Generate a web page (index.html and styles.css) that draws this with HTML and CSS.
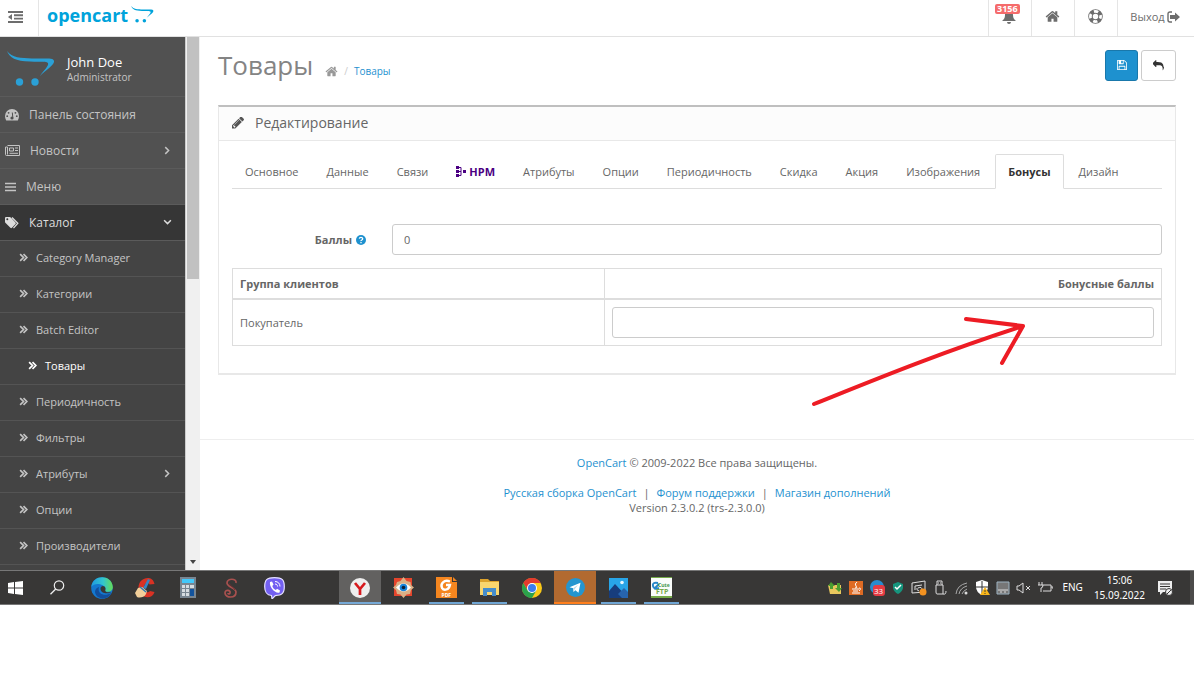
FILE: index.html
```html
<!DOCTYPE html>
<html lang="ru">
<head>
<meta charset="utf-8">
<title>Товары</title>
<link rel="stylesheet" href="styles.css">
</head>
<body>
<svg class="defs" aria-hidden="true">
  <symbol id="home" viewBox="0 0 1792 1792"><path d="M1472 992v480q0 26-19 45t-45 19h-384v-384h-256v384h-384q-26 0-45-19t-19-45v-480q0-1 .5-3t.5-3l575-474 575 474q1 2 1 6zm223-69l-62 74q-8 9-21 11h-3q-13 0-21-7l-692-577-692 577q-12 8-24 7-13-2-21-11l-62-74q-8-10-7-23.500t11-21.500l719-599q32-26 76-26t76 26l244 204v-195q0-14 9-23t23-9h192q14 0 23 9t9 23v408l219 182q10 8 11 21.500t-7 23.500z"/></symbol>
  <symbol id="dbl" viewBox="0 0 8 8"><path d="M1 1l3 3-3 3M4 1l3 3-3 3" fill="none" stroke="currentColor" stroke-width="1.500"/></symbol>
  <symbol id="right" viewBox="0 0 8 8"><path d="M2 1l3 3-3 3" fill="none" stroke="currentColor" stroke-width="1.300"/></symbol>
  <symbol id="down" viewBox="0 0 8 8"><path d="M1 2l3 3 3-3" fill="none" stroke="currentColor" stroke-width="1.300"/></symbol>
  <symbol id="cart" viewBox="0 0 48 36"><path d="M0 0C5 7 14 7 25 7.500C38 8 48 6 47 11C46 15 39 19 33 25C37 19 42 15 41 12C40 10 31 11 23 10.500C8 10 3 7 0 0z"/><circle cx="12.500" cy="31" r="3.700"/><circle cx="28" cy="31" r="3.700"/></symbol>
</svg>
<div class="screen">
  <header class="topbar">
    <button class="collapse" aria-label="Свернуть меню"><svg width="15" height="12" viewBox="0 0 15 12"><path d="M0 1h15M6 4.300h9M6 7.600h9M0 11h15" stroke="currentColor" stroke-width="1.900"/><path d="M4 3v6L0 6z"/></svg></button>
    <a class="brand" href="#">opencart<svg width="25" height="17"><use href="#cart"/></svg></a>
    <nav class="tools">
      <a href="#" aria-label="Уведомления"><svg width="14" height="14" viewBox="0 0 14 14"><path d="M7 0c3 0 4 2 4 5 0 3 1 4 3 6H0c2-2 3-3 3-6 0-3 1-5 4-5zM5 12h4q0 2-2 2t-2-2z"/></svg><span class="count">3156</span></a>
      <a href="#" aria-label="Главная"><svg width="15" height="15"><use href="#home"/></svg></a>
      <a href="#" aria-label="Помощь"><svg width="15" height="15" viewBox="0 0 15 15"><circle cx="7.500" cy="7.500" r="5" fill="none" stroke="currentColor" stroke-width="4.500"/><circle cx="7.500" cy="7.500" r="5.100" fill="none" stroke="#fff" stroke-width="2.700" stroke-dasharray="4.400 3.610" stroke-dashoffset="2.200"/></svg></a>
      <a class="logout" href="#">Выход<svg width="13" height="12" viewBox="0 0 13 12"><path d="M5 1H3Q1 1 1 3v6q0 2 2 2h2" fill="none" stroke="currentColor" stroke-width="1.400"/><path d="M3 4h5V1.500L13 6l-5 4.500V8H3z"/></svg></a>
    </nav>
  </header>
  <div class="body">
    <aside class="sidebar">
      <div class="profile"><svg width="48" height="36"><use href="#cart"/></svg><div><b>John Doe</b><small>Administrator</small></div></div>
      <nav class="menu">
        <a href="#"><svg width="14" height="12" viewBox="0 0 14 12"><path d="M0 7a7 7 0 0114 0q0 2.500-1.200 4.500H1.200Q0 9.500 0 7z"/><path d="M7.300 3.500l.5 5" stroke="#515151" stroke-width="1"/><circle class="hole" cx="7" cy="9" r="1.600"/><circle class="hole" cx="2.200" cy="7.200" r=".9"/><circle class="hole" cx="3.600" cy="3.800" r=".9"/><circle class="hole" cx="10.400" cy="3.800" r=".9"/><circle class="hole" cx="11.800" cy="7.200" r=".9"/></svg>Панель состояния</a>
        <a href="#"><svg width="15" height="11" viewBox="0 0 15 11"><path d="M2.500 .5h12v10H1.500q-1 0-1-1V2h2v7.500M4.500 3h4v3h-4zM10 3h3M10 5.500h3M4.500 8.300H13" fill="none" stroke="currentColor"/></svg>Новости<svg class="arrow" width="9" height="9"><use href="#right"/></svg></a>
        <a href="#"><svg width="11" height="10" viewBox="0 0 11 10"><path d="M0 1.500h11M0 5h11M0 8.500h11" stroke="currentColor" stroke-width="1.700"/></svg>Меню</a>
        <a class="open" href="#"><svg width="14" height="12" viewBox="0 0 14 12"><path d="M0 1q0-1 1-1h3.500q.7 0 1.300.6L10.500 5.500q.8.800 0 1.600L7 10.800q-.8.800-1.600 0L.6 6Q0 5.400 0 4.700z"/><path d="M7 .5l5.800 5.700L8.500 11.200" fill="none" stroke="currentColor" stroke-width="1.300"/><circle cx="2.300" cy="2.300" r="1" fill="#363636"/></svg>Каталог<svg class="arrow" width="9" height="9"><use href="#down"/></svg></a>
      </nav>
      <nav class="submenu">
        <a href="#"><svg><use href="#dbl"/></svg>Category Manager</a>
        <a href="#"><svg><use href="#dbl"/></svg>Категории</a>
        <a href="#"><svg><use href="#dbl"/></svg>Batch Editor</a>
        <a class="current" href="#"><svg><use href="#dbl"/></svg>Товары</a>
        <a href="#"><svg><use href="#dbl"/></svg>Периодичность</a>
        <a href="#"><svg><use href="#dbl"/></svg>Фильтры</a>
        <a href="#"><svg><use href="#dbl"/></svg>Атрибуты<svg class="arrow"><use href="#right"/></svg></a>
        <a href="#"><svg><use href="#dbl"/></svg>Опции</a>
        <a href="#"><svg><use href="#dbl"/></svg>Производители</a>
      </nav>
    </aside>
    <div class="scroll"><div class="thumb"></div><svg width="6" height="4" viewBox="0 0 6 4"><path d="M0 0h6L3 4z"/></svg></div>
    <main class="content">
      <div class="heading">
        <h1>Товары</h1>
        <nav class="crumbs"><a href="#" aria-label="Главная"><svg width="13" height="13"><use href="#home"/></svg></a><span>/</span><a href="#">Товары</a></nav>
        <div class="actions">
          <button class="btn save" aria-label="Сохранить"><svg width="10" height="10" viewBox="128 128 1536 1536"><path d="M512 1536h768v-384h-768v384zm896 0h128v-896q0-14-10-38.500t-20-34.500l-281-281q-10-10-34-20t-39-10v416q0 40-28 68t-68 28h-576q-40 0-68-28t-28-68v-416h-128v1280h128v-416q0-40 28-68t68-28h832q40 0 68 28t28 68v416zm-384-928v-320q0-13-9.500-22.500t-22.500-9.500h-192q-13 0-22.500 9.500t-9.500 22.500v320q0 13 9.500 22.500t22.500 9.500h192q13 0 22.500-9.500t9.500-22.500zm640 32v928q0 40-28 68t-68 28h-1344q-40 0-68-28t-28-68v-1344q0-40 28-68t68-28h928q40 0 88 20t76 48l280 280q28 28 48 76t20 88z"/></svg></button>
          <button class="btn" aria-label="Назад"><svg width="11" height="11" viewBox="0 0 1792 1792"><path d="M1792 1120q0 166-127 451-3 7-10.500 24t-13.500 30-13 22q-12 17-28 17-15 0-23.500-10t-8.500-25q0-9 2.500-26.500t2.500-23.500q5-68 5-123 0-112-19.500-200.500t-54-153.500-89-112-118-78-149-47.500-176-22.500-204.500-7h-224v256q0 26-19 45t-45 19-45-19l-512-512q-19-19-19-45t19-45l512-512q19-19 45-19t45 19 19 45v256h224q713 0 875 403 53 134 53 333z"/></svg></button>
        </div>
      </div>
      <section class="panel">
        <h2><svg width="12" height="12" viewBox="128 256 1520 1408"><path d="M491 1536l91-91-235-235-91 91v107h128v128h107zm523-928q0-22-22-22-10 0-17 7l-542 542q-7 7-7 17 0 22 22 22 10 0 17-7l542-542q7-7 7-17zm-54-192l416 416-832 832h-416v-416zm683 96q0 53-37 90l-166 166-416-416 166-165q36-38 90-38 53 0 91 38l235 234q37 39 37 91z"/></svg>Редактирование</h2>
        <div class="panel-body">
          <nav class="tabs">
            <a href="#">Основное</a><a href="#">Данные</a><a href="#">Связи</a>
            <a class="hpm" href="#"><svg width="10" height="11" viewBox="0 0 10 11"><path d="M0 0h3v3H0zM0 4h3v3H0zM0 8h3v3H0zM7 4h3v3H7z"/><path d="M2 1.500h3v8H2M2 5.500h3" fill="none" stroke="currentColor"/></svg>HPM</a>
            <a href="#">Атрибуты</a><a href="#">Опции</a><a href="#">Периодичность</a><a href="#">Скидка</a><a href="#">Акция</a><a href="#">Изображения</a><a class="active" href="#">Бонусы</a><a href="#">Дизайн</a>
          </nav>
          <div class="field">
            <label for="points">Баллы <svg width="10" height="10" viewBox="0 0 10 10"><circle cx="5" cy="5" r="5"/><path d="M3.300 3.700Q3.500 2.300 5 2.300T6.700 3.700Q6.700 4.500 5.800 5T5 6.200M5 7v1.200" fill="none" stroke="#fff" stroke-width="1.300"/></svg></label>
            <input id="points" type="text" value="0">
          </div>
          <table>
            <thead><tr><th>Группа клиентов</th><th class="num">Бонусные баллы</th></tr></thead>
            <tbody><tr><td>Покупатель</td><td><input type="text" aria-label="Бонусные баллы, Покупатель"></td></tr></tbody>
          </table>
        </div>
        <svg class="pointer" width="220" height="92" viewBox="0 0 220 92" aria-hidden="true"><path d="M5 89C60 67 130 38 214 11M157 4l57 7-21 37"/></svg>
      </section>
      <footer class="footer">
        <p><a href="#">OpenCart</a> © 2009-2022 Все права защищены.</p>
        <p class="links"><a href="#">Русская сборка OpenCart</a><span>|</span><a href="#">Форум поддержки</a><span>|</span><a href="#">Магазин дополнений</a></p>
        <p>Version 2.3.0.2 (trs-2.3.0.0)</p>
      </footer>
    </main>
  </div>
  <div class="taskbar">
    <button class="start" aria-label="Пуск"><svg width="15" height="14" viewBox="0 0 15 14"><path fill="#fff" d="M0 2l6-1v5.500H0zM7 .9L15 0v6.500H7zM0 7.500h6V13l-6-1zM7 7.500h8V14l-8-1z"/></svg></button>
    <button class="search" aria-label="Поиск"><svg width="15" height="15" viewBox="0 0 15 15"><circle cx="9" cy="5.500" r="4.700" fill="none" stroke="#eee" stroke-width="1.200"/><path d="M5.700 9L.5 14.300" stroke="#eee" stroke-width="1.300"/></svg></button>
    <button aria-label="Edge"><svg width="22" height="22" viewBox="0 0 22 22"><defs><linearGradient id="eg" x1="0" x2="1"><stop offset="0" stop-color="#1f9be0"/><stop offset=".55" stop-color="#32c5cf"/><stop offset="1" stop-color="#65dc55"/></linearGradient></defs><circle cx="11" cy="11" r="10.800" fill="#1478cf"/><path d="M.3 10C1.500-3 21-3 21.800 10c.2 4-4 5.500-7.300 4.500-1.500-.5.200-1.300-.2-3.500C13 6.500 3 5 .3 10z" fill="url(#eg)"/><path d="M8 10c-2 7 5 10 12.500 6C17 22 11 22.500 7 20 2 16 4 11 8 10z" fill="#124e9c"/><path d="M14.500 11.500c-.5-3.500-5-3-5 0 0 5 7 6 11.500 3.500-2 0-6 1-6.700-1z" fill="#383736"/></svg></button>
    <button aria-label="CCleaner"><svg width="22" height="22" viewBox="0 0 22 22"><path d="M20.500 7l-5 .5c-1-2.500-5-2-5.500 2.500-.5 5 4 6.500 6 4l4.500 1c-2 8-15 7-16-4C4 0 19-3 20.500 7z" fill="#d83224"/><path d="M14 2l2 1-4 9-3-1z" fill="#3484c4"/><path d="M4 11l4-1 5 4-1 3c-2 4-7 4-9 3l-2-4z" fill="#f2cf9a"/><path d="M6 10l6 5" stroke="#3178b0" stroke-width="1.500"/></svg></button>
    <button aria-label="Калькулятор"><svg width="16" height="21" viewBox="0 0 16 21"><path fill="#788591" d="M0 0h16v21H0z"/><path fill="#42c8fa" d="M2 2h12v4H2z"/><path fill="#d6dce1" d="M2 8h3v3H2zM6 8h3v3H6zM10 8h4v3h-4zM2 12h3v3H2zM6 12h3v3H6zM2 16h3v3H2zM6 16h3v3H6z"/><path fill="#12539d" d="M10 12h4v7h-4z"/></svg></button>
    <button aria-label="S"><svg width="14" height="20" viewBox="0 0 14 20"><path d="M12 5c1-5-9-5-9 0 0 4 9 5 9 9 0 7-11 6-11 1 0-4 6-3 5 0-.5 1.500-2 1-2 0" fill="none" stroke="#a9514f" stroke-width="1.700"/><path d="M5 5c1 3 5 4 6 7" fill="none" stroke="#672e30"/></svg></button>
    <button aria-label="Viber"><svg width="21" height="22" viewBox="0 0 21 22"><path d="M10.500 .6c8 0 9.800 2.500 9.800 9 0 6.500-2 8.700-9 9L8 22l-.5-3.500C2.500 18 .7 15.500.7 9.600c0-6.500 2-9 9.800-9z" fill="#7360f2" stroke="#e5e1ff" stroke-width="1.200"/><path d="M6 5l2-.5 1.500 3L8.300 9c.5 2 1.800 3 3.500 4l1.300-1.300L16 13.500l-.5 2C11 17 5 9.500 6 5z" fill="#fff"/><path d="M11 4.500c3 0 5 2 5 5M11 7c1.500 0 2.500 1 2.500 2.500" fill="none" stroke="#fff"/></svg></button>
    <button class="yandex" aria-label="Яндекс Браузер"><svg width="20" height="20" viewBox="0 0 20 20"><circle cx="10" cy="10" r="10" fill="#eee"/><path d="M5 5l5 6 5-6M10 10v7" fill="none" stroke="#d7191d" stroke-width="2.700"/></svg></button>
    <button aria-label="Просмотр изображений"><svg width="21" height="21" viewBox="0 0 21 21"><path fill="#e5452c" d="M1 1h18v18H1z"/><path fill="#dab086" d="M10.500 0l3 4 4 1 .5 3 3 2.500L18 13l-1 4-3.500.5-3 3.500-3-3.500L4 17l-1-4-3-2.500L3 8l1-3 3.500-1z"/><path d="M3 10.500q7.500-8 15 0-7.500 8-15 0z" fill="#fff"/><circle cx="10.500" cy="10.500" r="3.800" fill="#1684da"/><circle cx="10.500" cy="10.500" r="1.800" fill="#102034"/></svg></button>
    <button class="running" aria-label="Foxit PDF"><svg width="21" height="21" viewBox="0 0 21 21"><path fill="#f5861f" d="M0 0h16v5h5v16H0z"/><path fill="#f5861f" d="M17 0l4 4h-4z"/><path d="M14 4.500C8 2 4 7 6 11c2 3 7 2 8-3h-4" fill="none" stroke="#fff" stroke-width="2.300"/><text x="5.500" y="20" class="tiny">PDF</text></svg></button>
    <button class="running" aria-label="Проводник"><svg width="19" height="17" viewBox="0 0 19 17"><path fill="#dda32b" d="M0 0h8l2 2h9v5H0z"/><path fill="#f9d66e" d="M0 3h19v13H0z"/><path fill="#468dcb" d="M3 9h13v8h-4v-4H7v4H3z"/></svg></button>
    <button aria-label="Chrome"><svg width="20" height="20" viewBox="0 0 20 20"><circle cx="10" cy="10" r="10" fill="#fbc917"/><path d="M1.300 5A10 10 0 0118.700 5H10L5.700 12.500z" fill="#e33b2e"/><path d="M1.300 5A10 10 0 0010 20l4.300-7.500H5.700z" fill="#2ba24c"/><circle cx="10" cy="10" r="5" fill="#fff"/><circle cx="10" cy="10" r="4" fill="#3b7ded"/></svg></button>
    <button class="telegram" aria-label="Telegram"><svg width="19" height="19" viewBox="0 0 19 19"><circle cx="9.500" cy="9.500" r="9.500" fill="#2495cf"/><path d="M3.500 9.200L14.500 4.700l-2 10-3.200-2.500-1.700 1.700-.5-3.700z" fill="#fff"/><path d="M7.100 10.200l5-3.500-3.500 4.500-1 2.700z" fill="#bcd9e8"/></svg></button>
    <button class="running" aria-label="Фотографии"><svg width="19" height="20" viewBox="0 0 19 20"><path fill="#28a5e8" d="M0 0h19v20H0z"/><path fill="#173d7d" d="M0 13l6-7 13 14H0z"/><path fill="#2764ad" d="M9 16l6-6 4 4v6h-6z"/><circle cx="13" cy="4.500" r="1.800" fill="#e8f7ff"/></svg></button>
    <button class="running" aria-label="CuteFTP"><svg width="21" height="21" viewBox="0 0 21 21"><path fill="#fafcfa" d="M0 0h21v21H0z"/><path fill="#75aa49" d="M0 0h21v1H0zM0 19h21v2H0z"/><path d="M7 6Q1 5 2 9t6 2M3 12l5-5" fill="none" stroke="#2889c8" stroke-width="2"/><text x="7" y="10" class="cute">Cute</text><text x="5" y="17" class="ftp">FTP</text></svg></button>
    <div class="tray">
      <svg viewBox="0 0 16 16"><path fill="#e9c75d" d="M1 5h13v9H3z"/><path fill="#4a9e31" d="M4 2l4 4H6v3H3V6H1zM12 12l-4-4h2V3h3v5h2z"/></svg>
      <svg viewBox="0 0 16 16"><path fill="#df6b24" d="M1 1h14v14H1z"/><path d="M9 2q-3 2-1 4T7 8M4 9h7M5 11h5M4 13h8M11 8q3 0 0 3" fill="none" stroke="#fff"/></svg>
      <svg viewBox="0 0 16 16"><circle cx="8" cy="7" r="7" fill="#278bce"/><rect x="4" y="5" width="12" height="11" rx="3" fill="#e53b43"/><text x="5" y="14" class="badge">33</text></svg>
      <svg viewBox="0 0 16 16"><path fill="#16957d" d="M8 2l5 2v4q-1 4-5 6-4-2-5-6V4z"/><path d="M5 7l2 2 4-4" fill="none" stroke="#fff" stroke-width="1.500"/></svg>
      <svg viewBox="0 0 16 16"><path d="M1 3l13-2v11L1 13zM4 10V6l7-1M7 8q4-2 4 2M8 11q-3-1-2-3" fill="none" stroke="#ddd"/><circle cx="12" cy="12" r="3.500" fill="#f39220"/></svg>
      <svg viewBox="0 0 16 16"><path d="M5 5V1h5v4M4 5h7v9H5q-1 0-1-2zM11 14q3 1 3-3M6 3h1M8 3h1" fill="none" stroke="#ddd"/></svg>
      <svg viewBox="0 0 16 16"><path d="M3 14Q4 5 14 3M6 14q1-6 8-8M9 14q1-3 5-5" fill="none" stroke="#aaa"/><circle cx="13" cy="13" r="1.500" fill="#ddd"/></svg>
      <svg viewBox="0 0 16 16"><path fill="#fff" d="M8 0l6 2v5q0 5-6 8-6-3-6-8V2z"/><path d="M8 1v13M2 7h12" stroke="#333"/><path fill="#f9b61b" d="M11 7l5 8H6z"/><path d="M11 10v2M11 13v1" stroke="#443"/></svg>
      <svg viewBox="0 0 16 16"><path d="M2 2h12v12H2z" fill="#777" stroke="#9eb4c2"/><path d="M3 10h10M5 12h2M9 12h2" stroke="#ddd"/></svg>
      <svg viewBox="0 0 16 16"><path d="M1 6h2l4-3v10l-4-3H1zM10 6l4 4M14 6l-4 4" fill="none" stroke="#ddd"/></svg>
      <svg viewBox="0 0 16 16"><path d="M6 5h8v6H6M14 7h2v2M2 2v3M5 2v3M1 5h5q0 3-2 3v4" fill="none" stroke="#ddd"/></svg>
      <span class="lang">ENG</span>
      <div class="clock"><span>15:06</span><span>15.09.2022</span></div>
      <svg class="notes" viewBox="0 0 16 16"><path fill="#eee" d="M1 1h14v11H6l-3 3v-3H1z"/><path d="M3 4h10M3 6.500h10M3 9h6" stroke="#383736"/><circle cx="12" cy="12" r="3.500" fill="#eee" stroke="#383736"/><path d="M10 14l4-4" stroke="#383736"/></svg>
    </div>
  </div>
</div>
</body>
</html>
```

FILE: styles.css
```css
* { box-sizing: border-box; }
body { margin: 0; background: #fff; color: #666; font: 11px/15px "Open Sans", "Noto Sans", sans-serif; }
a { color: #1e91cf; text-decoration: none; }
h1, h2, p { margin: 0; font-weight: 400; }
svg { flex: none; fill: currentColor; }
button { border: 0; padding: 0; background: none; color: inherit; font: inherit; }
.defs { position: absolute; width: 0; height: 0; }
.screen { margin-right: 6px; }

.topbar { display: flex; height: 37px; border-bottom: 1px solid #e1e1e1; }
.collapse { display: flex; align-items: center; justify-content: center; width: 39px; padding: 0 8px 2px 0; border-right: 1px solid #e5e5e5; color: #6d6d6d; }
.brand { display: flex; align-items: center; gap: 2px; padding: 0 8px 7px; color: #00a3db; font-weight: 700; font-size: 18px; line-height: 24px; }
.tools { display: flex; margin-left: auto; }
.tools a { position: relative; display: flex; align-items: center; justify-content: center; width: 43px; padding: 0 2px 3px 0; border-left: 1px solid #e5e5e5; color: #6d6d6d; }
.tools .logout { width: 77px; gap: 2px; }
.count { position: absolute; top: 4px; left: 6px; padding: 0 2px; border-radius: 2px; background: #f56b6b; color: #fff; font-weight: 700; font-size: 9px; line-height: 10px; }

.body { display: flex; }
.sidebar { width: 185px; padding-bottom: 5px; background: #444; }
.profile { display: flex; align-items: center; gap: 12px; height: 60px; padding: 5px 7px 0; background: #515151; color: #2ba0d6; border-bottom: 1px solid #5b5b5b; }
.profile b { display: block; color: #fff; font-weight: 400; font-size: 13px; line-height: 16px; }
.profile small { display: block; color: #c4c4c4; font-size: 10px; line-height: 14px; }
.menu a, .submenu a { display: flex; align-items: center; height: 36px; padding: 0 13px 0 5px; border-bottom: 1px solid #5b5b5b; }
.menu a { gap: 10px; background: #515151; color: #c4c4c4; font-size: 12px; }
.menu .open { background: #363636; color: #ddd; }
.hole { fill: #515151; }
.submenu a { gap: 8px; padding: 0 13px 2px 19px; color: #c4c4c4; border-color: #545454; }
.submenu svg { width: 9px; height: 9px; }
.submenu .current { padding-left: 28px; color: #fff; }
.arrow { margin-left: auto; }
.scroll { display: flex; flex-direction: column; align-items: center; justify-content: space-between; width: 15px; padding: 0 1px 6px; background: #f0f0f0; border-left: 1px solid #ccc; color: #444; }
.thumb { width: 100%; height: 242px; background: #c1c1c1; }

.content { flex: 1; min-width: 0; }
.heading { display: flex; align-items: center; height: 68px; padding: 0 18px 12px; }
.heading h1 { color: #848484; font-size: 26px; line-height: 36px; }
.crumbs { display: flex; align-items: center; gap: 6px; padding: 12px 0 0 12px; font-size: 10px; }
.crumbs a:first-child { display: flex; color: #999; }
.crumbs span { color: #ccc; }
.actions { display: flex; gap: 3px; margin-left: auto; }
.btn { display: flex; align-items: center; justify-content: center; width: 35px; height: 31px; border: 1px solid #ccc; border-radius: 3px; background: #fff; color: #333; }
.save { width: 33px; background: #1e91cf; border-color: #1978ab; color: #fff; }

.panel { position: relative; margin: 0 18px; border: 1px solid #e8e8e8; border-top: 2px solid #bfbfbf; border-bottom-width: 2px; }
.panel h2 { display: flex; align-items: center; gap: 11px; height: 34px; padding: 0 13px 2px; border-bottom: 1px solid #e8e8e8; background: #fcfcfc; color: #666; font-size: 14px; }
.panel svg { color: #555; }
.panel-body { padding: 13px 13px 27px; }
.tabs { display: flex; gap: 2px; margin-bottom: 35px; border-bottom: 1px solid #ddd; }
.tabs a { display: flex; align-items: center; gap: 3px; height: 35px; margin-bottom: -1px; padding: 0 12px; border: 1px solid transparent; color: #666; }
.tabs .hpm, .tabs .hpm svg { color: #4b0082; font-weight: 700; }
.tabs .active { border-color: #ddd #ddd #fff; border-radius: 2px 2px 0 0; color: #333; font-weight: 700; }
.field { display: grid; grid-template-columns: 134px 1fr; gap: 26px; align-items: center; margin-bottom: 13px; }
.field label { display: flex; align-items: center; justify-content: flex-end; gap: 4px; font-weight: 700; }
.field label svg { color: #1e91cf; }
input { display: block; width: 100%; height: 31px; padding: 0 11px; border: 1px solid #ccc; border-radius: 3px; background: #fff; color: #666; font: inherit; }
table { width: 100%; border-collapse: collapse; table-layout: fixed; }
th, td { padding: 7px; border: 1px solid #ddd; text-align: left; }
th { border-bottom-width: 2px; font-weight: 700; }
th:first-child { width: 40%; }
th.num { text-align: right; }
.panel .pointer { position: absolute; right: 146px; bottom: -34px; fill: none; stroke: #ed1c24; stroke-width: 4px; stroke-linecap: round; stroke-linejoin: round; }

.footer { margin-top: 64px; padding-top: 15px; border-top: 1px solid #eee; text-align: center; }
.links { display: flex; justify-content: center; gap: 7px; margin-top: 15px; }

.taskbar { display: flex; gap: 1px; height: 35px; background: #383736; border-top: 1px solid #777; border-bottom: 1px solid #777; }
.taskbar button { display: flex; align-items: center; justify-content: center; width: 42px; }
.taskbar .start { width: 30px; margin-right: 5px; }
.taskbar .search { margin-right: 2px; }
.taskbar .yandex { margin-left: 43px; background: #626160; box-shadow: inset 0 -2px #76a9d6; }
.taskbar .telegram { background: #b26a30; box-shadow: inset 0 -2px #ff7f1d; }
.running { background: linear-gradient(#6fa5d3, #6fa5d3) center bottom / 35px 2px no-repeat; }
.taskbar .running { background: linear-gradient(#6fa5d3, #6fa5d3) center bottom / 35px 2px no-repeat; }
.tiny { fill: #fff; font-size: 5px; font-weight: 700; }
.cute { fill: #43954a; font-size: 5px; font-weight: 700; }
.ftp { fill: #75aa49; font-size: 7px; font-weight: 700; }
.badge { fill: #fff; font-size: 8px; }
.tray { display: flex; align-items: center; gap: 5px; margin-left: auto; padding-right: 17px; border-right: 4px solid #4c4b4a; color: #fff; }
.tray svg { width: 16px; height: 16px; }
.lang { margin: 0 6px 0 4px; font-family: "Noto Sans", sans-serif; font-size: 10px; }
.clock { display: flex; flex-direction: column; align-items: center; font-family: "Noto Sans", sans-serif; font-size: 10px; }
.tray .notes { margin-left: 7px; }
```
